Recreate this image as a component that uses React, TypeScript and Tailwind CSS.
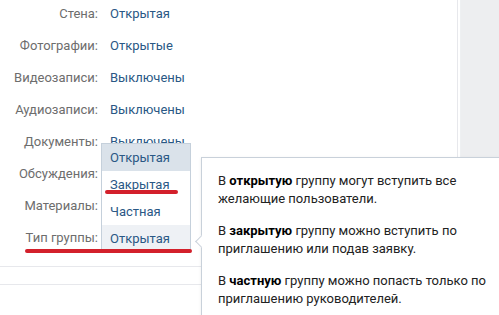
import React from 'react';

const rows = [
  ['Стена:', 'Открытая'],
  ['Фотографии:', 'Открытые'],
  ['Видеозаписи:', 'Выключены'],
  ['Аудиозаписи:', 'Выключены'],
  ['Документы:', 'Выключены'],
  ['Обсуждения:', 'Выключены'],
  ['Материалы:', 'Выключены'],
  ['Тип группы:', 'Открытая'],
];

function Row({ label, value }: { label: string; value: string }) {
  return (
    <div className="flex items-center h-8">
      <div className="w-[98px] text-right text-[#6d6d6d]">{label}</div>
      <div className="ml-3 text-[#2a5885]">{value}</div>
    </div>
  );
}

export default function App() {
  return (
    <div className="relative w-[499px] h-[315px] overflow-hidden flex bg-white text-[13px] leading-[18px] font-['Roboto','Liberation_Sans',sans-serif]">
      {/* основной блок */}
      <div className="w-[458px] border-r border-[#e7e8ec]">
        <div className="-mt-0.5 pb-3 border-b border-[#e7e8ec]">
          {rows.map(([l, v]) => (
            <Row key={l} label={l} value={v} />
          ))}
        </div>
        <div className="mt-[17px] border-t border-[#e7e8ec] pt-[26px]">
          <Row label="Товары:" value="Отключены" />
        </div>
      </div>
      <div className="w-[3px] border-r border-[#eef0f2]" />
      <div className="flex-1 bg-[#edeef0]" />

      {/* выпадающий список */}
      <div className="absolute left-[101px] top-[143px] w-[90px] border border-[#c5d0db] bg-white text-[#2a5885]">
        <div className="h-[27px] flex items-center pl-2 bg-[#dae2ea]">Открытая</div>
        <div className="h-[27px] flex items-center pl-2">Закрытая</div>
        <div className="h-[27px] flex items-center pl-2">Частная</div>
        <div className="h-[27px] flex items-center pl-2 bg-[#eef1f5]">Открытая</div>
      </div>

      {/* красные подчёркивания */}
      <div className="absolute left-[105px] top-[190px] w-[73px] h-[4px] rounded-full bg-[#d3202b]" />
      <div className="absolute left-[25px] top-[249px] w-[167px] h-[4px] rounded-full bg-[#d3202b]" />

      {/* подсказка */}
      <div className="absolute left-[201px] top-[157px] w-[320px] h-[200px] bg-white border border-[#c9d1da] shadow-[0_1px_3px_rgba(0,0,0,0.08)] pl-4 pt-[14px] text-[#222]">
        <div className="absolute -left-[5px] top-[79px] w-[9px] h-[9px] rotate-45 bg-white border-l border-b border-[#c9d1da]" />
        <p>
          В <b className="font-bold text-black">открытую</b> группу могут вступить все
          <br />
          желающие пользователи.
        </p>
        <p className="mt-[14px]">
          В <b className="font-bold text-black">закрытую</b> группу можно вступить по
          <br />
          приглашению или подав заявку.
        </p>
        <p className="mt-[14px]">
          В <b className="font-bold text-black">частную</b> группу можно попасть только по
          <br />
          приглашению руководителей.
        </p>
      </div>
    </div>
  );
}
